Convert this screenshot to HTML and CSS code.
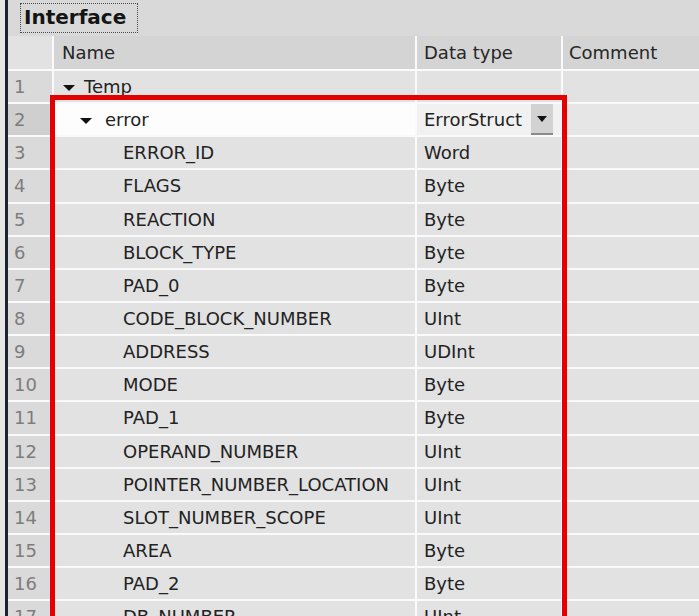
FILE: index.html
```html
<!DOCTYPE html>
<html>
<head>
<meta charset="utf-8">
<link rel="stylesheet" href="styles.css">
</head>
<body>
<div class="frame">
  <div class="edge"></div>
  <div class="bar"></div>
  <div class="panel">
    <div class="title"><span class="focus">Interface</span></div>
    <div class="table">
      <div class="hc num"></div>
      <div class="hc">Name</div>
      <div class="hc">Data type</div>
      <div class="hc">Comment</div>

      <div class="c num">1</div>
      <div class="c l1"><span class="tri"></span>Temp</div>
      <div class="c"></div>
      <div class="c"></div>

      <div class="c num sel">2</div>
      <div class="c l2 edit"><span class="tri"></span>error</div>
      <div class="c dt-edit">ErrorStruct<span class="dd"><span class="tri"></span></span></div>
      <div class="c cm-sel"></div>

      <div class="c num">3</div><div class="c l3">ERROR_ID</div><div class="c">Word</div><div class="c"></div>
      <div class="c num">4</div><div class="c l3">FLAGS</div><div class="c">Byte</div><div class="c"></div>
      <div class="c num">5</div><div class="c l3">REACTION</div><div class="c">Byte</div><div class="c"></div>
      <div class="c num">6</div><div class="c l3">BLOCK_TYPE</div><div class="c">Byte</div><div class="c"></div>
      <div class="c num">7</div><div class="c l3">PAD_0</div><div class="c">Byte</div><div class="c"></div>
      <div class="c num">8</div><div class="c l3">CODE_BLOCK_NUMBER</div><div class="c">UInt</div><div class="c"></div>
      <div class="c num">9</div><div class="c l3">ADDRESS</div><div class="c">UDInt</div><div class="c"></div>
      <div class="c num">10</div><div class="c l3">MODE</div><div class="c">Byte</div><div class="c"></div>
      <div class="c num">11</div><div class="c l3">PAD_1</div><div class="c">Byte</div><div class="c"></div>
      <div class="c num">12</div><div class="c l3">OPERAND_NUMBER</div><div class="c">UInt</div><div class="c"></div>
      <div class="c num">13</div><div class="c l3">POINTER_NUMBER_LOCATION</div><div class="c">UInt</div><div class="c"></div>
      <div class="c num">14</div><div class="c l3">SLOT_NUMBER_SCOPE</div><div class="c">UInt</div><div class="c"></div>
      <div class="c num">15</div><div class="c l3">AREA</div><div class="c">Byte</div><div class="c"></div>
      <div class="c num">16</div><div class="c l3">PAD_2</div><div class="c">Byte</div><div class="c"></div>
      <div class="c num">17</div><div class="c l3">DB_NUMBER</div><div class="c">UInt</div><div class="c"></div>
    </div>
    <div class="highlight"></div>
  </div>
</div>
</body>
</html>
```

FILE: styles.css
```css
html, body {
  margin: 0;
  padding: 0;
  width: 699px;
  height: 616px;
  overflow: hidden;
  background: #e2e2e2;
}

.frame {
  display: flex;
  width: 699px;
  height: 616px;
  font-family: "DejaVu Sans", "Liberation Sans", sans-serif;
  font-size: 18px;
  color: #222;
}

.edge {
  width: 5px;
  background: #e6e6e6;
}

.bar {
  width: 3px;
  background: #1d2331;
}

.panel {
  flex: 1;
  position: relative;
  overflow: hidden;
  background: #fafafa;
}

.title {
  height: 36px;
  background: #d9d9d9;
  display: flex;
  align-items: flex-start;
  padding-left: 12px;
}

.focus {
  margin-top: 3px;
  height: 30px;
  box-sizing: border-box;
  border: 1px dotted #4a4a4a;
  padding: 0 11px 0 3px;
  font-weight: bold;
  font-size: 20px;
  line-height: 27px;
  color: #141414;
}

.table {
  display: grid;
  grid-template-columns: 44px 361px 144px 1fr;
  grid-template-rows: 33px;
  grid-auto-rows: 31.15px;
  gap: 2px;
  background: #fafafa;
}

.hc {
  background: #d4d4d4;
  display: flex;
  align-items: center;
  padding-left: 7px;
  white-space: nowrap;
  color: #262626;
}

.hc:nth-child(2) { padding-left: 8px; }
.hc:nth-child(4) { padding-left: 6px; }

.hc.num {
  background: #e2e2e2;
}

.c {
  background: #e2e2e2;
  display: flex;
  align-items: center;
  padding-left: 7px;
  white-space: nowrap;
}

.c.num {
  background: #dadada;
  color: #7d7d7d;
  padding-left: 6px;
}

.c.num.sel {
  background: #cfcfcf;
}

.c.l1 { padding-left: 9px; }
.c.l2 { padding-left: 26px; }
.c.l3 { padding-left: 69px; }

.tri {
  display: inline-block;
  width: 0;
  height: 0;
  border-left: 6px solid transparent;
  border-right: 6px solid transparent;
  border-top: 6px solid #111;
  margin-right: 9px;
  margin-top: 2px;
}

.c.l2 .tri { margin-right: 13px; }

.c.edit {
  background: #fdfdfd;
}

.c.dt-edit {
  background: #f1f1f1;
  position: relative;
}

.dd {
  position: absolute;
  left: 114px;
  top: 0;
  width: 22px;
  height: 31px;
  box-sizing: border-box;
  background: #d2d2d2;
  border-bottom: 2px solid #8a8a8a;
  display: flex;
  align-items: center;
  justify-content: center;
}

.dd .tri {
  margin: 0;
  border-left-width: 5px;
  border-right-width: 5px;
  border-top-width: 6px;
}

.c.cm-sel {
  background: #e6e6e6;
}

.highlight {
  position: absolute;
  left: 42px;
  top: 95px;
  width: 517px;
  height: 600px;
  box-sizing: border-box;
  border: 5px solid #e30000;
  pointer-events: none;
}
```
